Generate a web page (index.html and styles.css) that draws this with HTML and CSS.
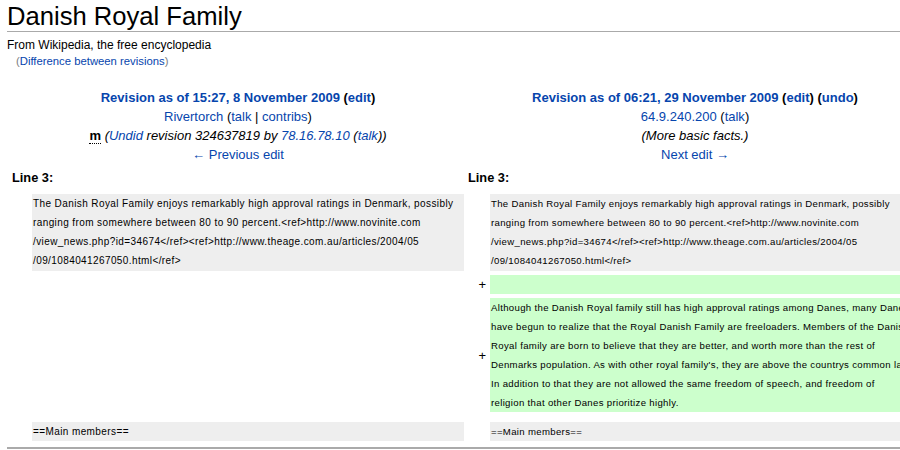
FILE: index.html
```html
<!DOCTYPE html>
<html lang="en">
<head>
<meta charset="utf-8">
<title>Danish Royal Family - Difference between revisions</title>
<link rel="stylesheet" href="styles.css">
</head>
<body>
<div class="page">
  <h1 class="title">Danish Royal Family</h1>
  <div class="site-sub">From Wikipedia, the free encyclopedia</div>
  <div class="content-sub">(<a href="#">Difference between revisions</a>)</div>

  <div class="diff">
    <div class="diff-head left">
      <div class="strong"><a href="#">Revision as of 15:27, 8 November 2009</a> (<a href="#">edit</a>)</div>
      <div><a href="#">Rivertorch</a> (<a href="#">talk</a> | <a href="#">contribs</a>)</div>
      <div><abbr class="minor">m</abbr> <span class="comment">(<a href="#">Undid</a> revision 324637819 by <a href="#">78.16.78.10</a> (<a href="#">talk</a>))</span></div>
      <div><a href="#">← Previous edit</a></div>
    </div>
    <div class="diff-head right">
      <div class="strong"><a href="#">Revision as of 06:21, 29 November 2009</a> (<a href="#">edit</a>) (<a href="#">undo</a>)</div>
      <div><a href="#">64.9.240.200</a> (<a href="#">talk</a>)</div>
      <div><span class="comment">(More basic facts.)</span></div>
      <div><a href="#">Next edit →</a></div>
    </div>

    <div class="lineno left">Line 3:</div>
    <div class="lineno right">Line 3:</div>

    <div class="marker"></div>
    <div class="cell context h4">The Danish Royal Family enjoys remarkably high approval ratings in Denmark, possibly<br>ranging from somewhere between 80 to 90 percent.&lt;ref&gt;http://www.novinite.com<br>/view_news.php?id=34674&lt;/ref&gt;&lt;ref&gt;http://www.theage.com.au/articles/2004/05<br>/09/1084041267050.html&lt;/ref&gt;</div>
    <div class="marker"></div>
    <div class="cell context h4 new">The Danish Royal Family enjoys remarkably high approval ratings in Denmark, possibly<br>ranging from somewhere between 80 to 90 percent.&lt;ref&gt;http://www.novinite.com<br>/view_news.php?id=34674&lt;/ref&gt;&lt;ref&gt;http://www.theage.com.au/articles/2004/05<br>/09/1084041267050.html&lt;/ref&gt;</div>

    <div class="empty"></div>
    <div class="marker">+</div>
    <div class="cell added new">&nbsp;</div>

    <div class="empty"></div>
    <div class="marker">+</div>
    <div class="cell added new">Although the Danish Royal family still has high approval ratings among Danes, many Danes<br>have begun to realize that the Royal Danish Family are freeloaders. Members of the Danish<br>Royal family are born to believe that they are better, and worth more than the rest of<br>Denmarks population. As with other royal family's, they are above the countrys common laws.<br>In addition to that they are not allowed the same freedom of speech, and freedom of<br>religion that other Danes prioritize highly.</div>

    <div class="spacer"></div>

    <div class="marker"></div>
    <div class="cell context">==Main members==</div>
    <div class="marker"></div>
    <div class="cell context new">==Main members==</div>
  </div>
  <hr class="hardsep">
</div>
</body>
</html>
```

FILE: styles.css
```css
html, body {
  margin: 0;
  padding: 0;
  background: #fff;
  overflow: hidden;
}
body {
  font-family: "Liberation Sans", Arial, sans-serif;
  font-size: 12px;
  color: #000;
}
a {
  color: #0645ad;
  text-decoration: none;
}
.page {
  padding: 0 0 0 7px;
  width: 940px;
}
.title {
  margin: 0;
  padding: 2px 0 0 0;
  font-size: 25.6px;
  font-weight: normal;
  line-height: 29px;
  border-bottom: 1px solid #aaa;
  width: 894px;
}
.site-sub {
  margin-top: 6px;
  line-height: 14px;
}
.content-sub {
  margin: 3px 0 0 9px;
  font-size: 11.3px;
  line-height: 13px;
  color: #7d7d7d;
}
.diff {
  display: grid;
  grid-template-columns: 16px 432px 18px 432px;
  column-gap: 4px;
  row-gap: 4px;
  margin: 20px 0 0 5px;
}
.diff-head {
  grid-column: span 2;
  text-align: center;
  font-size: 13px;
  line-height: 19px;
}
.diff-head .strong {
  font-weight: bold;
}
.minor {
  font-weight: bold;
  text-decoration: none;
  border-bottom: 1px dotted #000;
}
.comment {
  font-style: italic;
}
.lineno {
  grid-column: span 2;
  font-weight: bold;
  font-size: 12.8px;
  line-height: 19px;
  margin-top: 0;
  margin-bottom: 3px;
}
.empty {
  grid-column: span 2;
}
.marker {
  display: flex;
  align-items: center;
  justify-content: flex-end;
  font-size: 13px;
  line-height: 19px;
}
.cell {
  font-size: 10px;
  letter-spacing: 0.4px;
  line-height: 19px;
  padding: 0 0 0 1px;
  white-space: nowrap;
  overflow: hidden;
}
.cell.new {
  font-size: 9.6px;
  letter-spacing: 0.33px;
}
.h4 {
  height: 77px;
}
.context {
  background: #eee;
}
.added {
  background: #cfc;
}
.spacer {
  grid-column: span 4;
  height: 2px;
}
.hardsep {
  margin: 6px 0 0 0;
  border: 0;
  height: 2px;
  background: #aaa;
  width: 893px;
}
```
